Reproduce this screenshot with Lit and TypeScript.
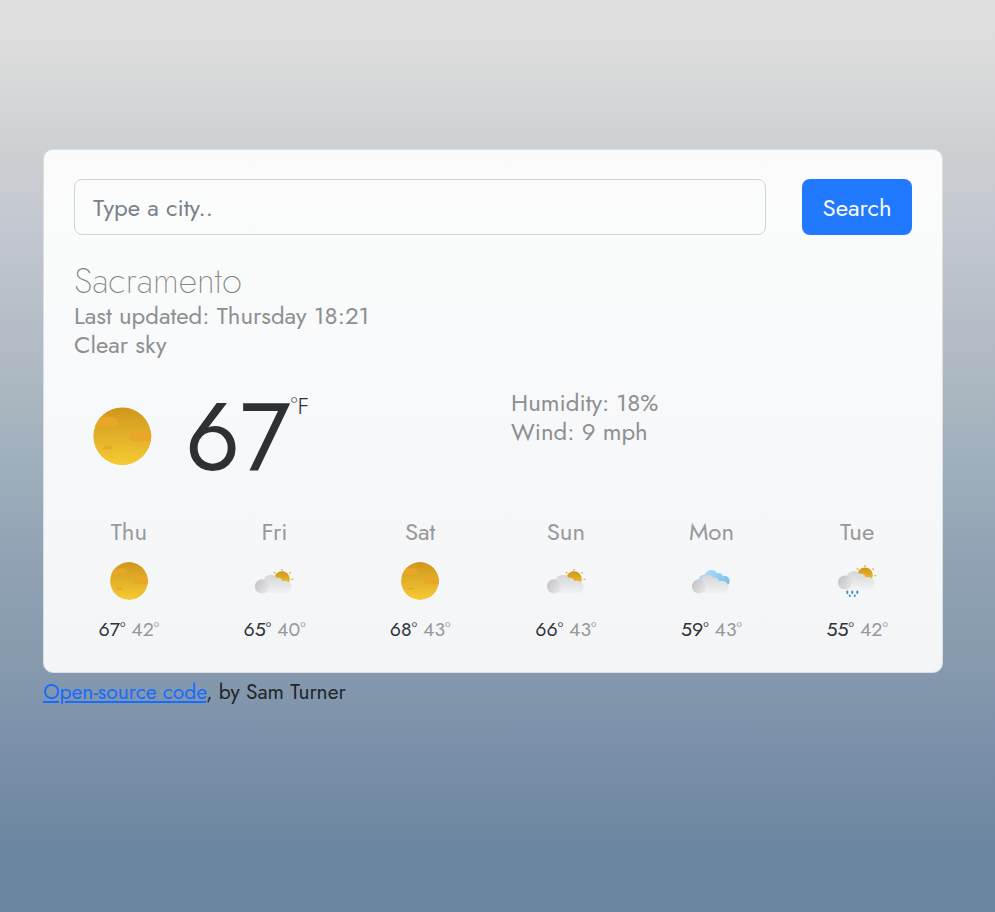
import { LitElement, html, svg, css } from "lit";
import { customElement, property } from "lit/decorators.js";

type Sky = "clear" | "partly" | "cloudy" | "rain";

interface Day { name: string; sky: Sky; high: number; low: number; }

const days: Day[] = [
  { name: "Thu", sky: "clear", high: 67, low: 42 },
  { name: "Fri", sky: "partly", high: 65, low: 40 },
  { name: "Sat", sky: "clear", high: 68, low: 43 },
  { name: "Sun", sky: "partly", high: 66, low: 43 },
  { name: "Mon", sky: "cloudy", high: 59, low: 43 },
  { name: "Tue", sky: "rain", high: 55, low: 42 },
];

// All glyphs share a 50x50 viewBox.
const gradients = svg`<defs>
  <linearGradient id="sun" x1="0" y1="0" x2="0" y2="1"><stop stop-color="#cf961d"/><stop offset="1" stop-color="#f6cb33"/></linearGradient>
  <linearGradient id="cloud" gradientUnits="userSpaceOnUse" x1="0" y1="18" x2="0" y2="38"><stop stop-color="#d3d4d6"/><stop offset="1" stop-color="#f3f4f6"/></linearGradient>
  <linearGradient id="puff" x1="0" y1="0.2" x2="1" y2="0.8"><stop stop-color="#c3c3c5"/><stop offset="1" stop-color="#e8e8ea"/></linearGradient>
  <linearGradient id="blue" x1="0" y1="0" x2="1" y2="1"><stop stop-color="#b9e0f6"/><stop offset="1" stop-color="#68bdee"/></linearGradient>
  <clipPath id="disc"><circle cx="25" cy="25" r="19"/></clipPath>
</defs>`;

const cloud = svg`
  <path fill="url(#cloud)" d="M12.8 37.6V25Q14 25 14.5 24.5A7.7 7.7 0 0 1 28 21.8 4.6 4.6 0 0 1 33.4 25.2 6.4 6.4 0 1 1 38.3 37.6Z"/>
  <circle cx="13" cy="30.4" r="7.1" fill="url(#puff)"/>`;

const smallSun = svg`
  <circle cx="33" cy="23.1" r="7.8" fill="url(#sun)"/>
  <path stroke="#e9b235" stroke-width="1.4" d="M33 12.9v1.8M25 16l1.2 1.5M40.4 17.6l1.3-1.3M42.4 23.4h2"/>`;

const art = {
  clear: svg`<g clip-path="url(#disc)"><circle cx="25" cy="25" r="19" fill="url(#sun)"/>
    <g fill="#eaa629"><rect x="5" y="12.6" width="17.5" height="6" rx="3"/><rect x="29.5" y="21.8" width="20" height="6.4" rx="3"/><rect x="12.5" y="31.6" width="6.2" height="2.1" rx="1"/></g></g>`,
  partly: svg`${smallSun}${cloud}`,
  cloudy: svg`<path fill="url(#blue)" d="M12.7 31v-6A6.2 6.2 0 0 1 19 18.4 6.7 6.7 0 0 1 31 17.2 4.4 4.4 0 0 1 36.8 20 5.2 5.2 0 1 1 40 30Z"/>${cloud}`,
  rain: svg`<g transform="translate(0 -3.8)">${smallSun}${cloud}</g>
    <path stroke="#3b93ca" stroke-width="2" stroke-linecap="round" d="M15.3 35.4v1.7M20.3 35.4v1.7M25.3 35.4v1.7M17.8 39.5v.6M22.8 39.5v.6"/>`,
};

@customElement("weather-icon")
export class WeatherIcon extends LitElement {
  @property() sky: Sky = "clear";
  static styles = css`
    :host { display: block; }
    svg { display: block; width: 100%; height: 100%; }
  `;
  render() {
    return html`<svg viewBox="0 0 50 50" aria-hidden="true">${gradients}${art[this.sky]}</svg>`;
  }
}

@customElement("app-root")
export class AppRoot extends LitElement {
  static styles = css`
    :host {
      display: block; box-sizing: border-box; min-height: 912px; padding: 148.5px 52px 0 43px;
      font-family: Jost, Lato, sans-serif; color: #212529;
      background: linear-gradient(to bottom, #dfdfdf 0, #dcdcdc 50px, #cdd0d2 150px, #c3c7d0 228px, #a9b6c0 400px, #a0b0bd 456px, #91a2b4 560px, #879aae 660px, #7a90a9 750px, #6b86a0 850px, #6b86a0 912px);
    }
    * { box-sizing: border-box; }
    .card {
      height: 524px; padding: 29.5px 30px 0; border: 1px solid #dcdfe2; border-radius: 10px;
      background: linear-gradient(#fbfbfb, #fafcfb 18%, #f7f9fb 42%, #f4f5f7);
    }
    .search { display: flex; gap: 36px; }
    .field {
      flex: 1; min-width: 0; height: 56px; padding: 0 18px; border: 1px solid #ced4da; border-radius: 8px;
      background: transparent; font: 400 24px Jost, Lato, sans-serif; outline: 0;
    }
    .field::placeholder { color: #78828b; opacity: 1; }
    .button {
      width: 110px; height: 56px; padding: 0; border: 0; border-radius: 8px; background: #2079ff; color: #f8f9fa;
      font: 400 24px Jost, Lato, sans-serif;
    }
    .city { margin: 25px 0 0; font-size: 36px; line-height: 40px; font-weight: 200; color: #828384; }
    .facts { margin: 0; padding: 0; list-style: none; font-size: 24px; line-height: 29px; color: #8e8f90; }
    .city + .facts { margin-top: 1px; }
    .current { display: flex; height: 120px; margin-top: 29px; }
    .now { display: flex; width: 437px; }
    .big { width: 76.5px; height: 76.5px; margin: 10px 0 0 9.5px; }
    .temp { margin-left: 25px; font-size: 96px; line-height: 98px; color: #2f3033; }
    .unit { margin-top: 4px; font-size: 24px; line-height: 28px; font-weight: 300; color: #303236; }
    .week { display: grid; grid-template-columns: repeat(6, 1fr); margin: 9px -18px 0; text-align: center; }
    .name { font-size: 24px; line-height: 30px; color: #98999b; font-weight: 400; }
    .icon { width: 50px; height: 50px; margin: 9px auto 10px; }
    .range { display: flex; justify-content: center; gap: 6px; font-size: 19.5px; line-height: 26px; color: #98999c; font-weight: 400; }
    .high { color: #303236; }
    .credit { font-size: 21px; line-height: 26px; margin: 6.5px 0 0; }
    .link { color: #176bff; text-decoration: underline; text-decoration-thickness: 2px; text-underline-offset: 2px; }
  `;

  render() {
    return html`
      <main class="card">
        <form class="search">
          <input class="field" type="search" placeholder="Type a city.." />
          <button class="button" type="button">Search</button>
        </form>
        <h1 class="city">Sacramento</h1>
        <ul class="facts"><li>Last updated: Thursday 18:21</li><li>Clear sky</li></ul>
        <section class="current">
          <div class="now">
            <weather-icon class="big" sky="clear"></weather-icon>
            <span class="temp">67</span><span class="unit">°F</span>
          </div>
          <ul class="facts"><li>Humidity: 18%</li><li>Wind: 9 mph</li></ul>
        </section>
        <section class="week">
          ${days.map((d) => html`<div>
            <div class="name">${d.name}</div>
            <weather-icon class="icon" .sky=${d.sky}></weather-icon>
            <div class="range"><span class="high">${d.high}°</span><span>${d.low}°</span></div>
          </div>`)}
        </section>
      </main>
      <p class="credit"><a class="link" href="#">Open-source code</a>, by Sam Turner</p>`;
  }
}
